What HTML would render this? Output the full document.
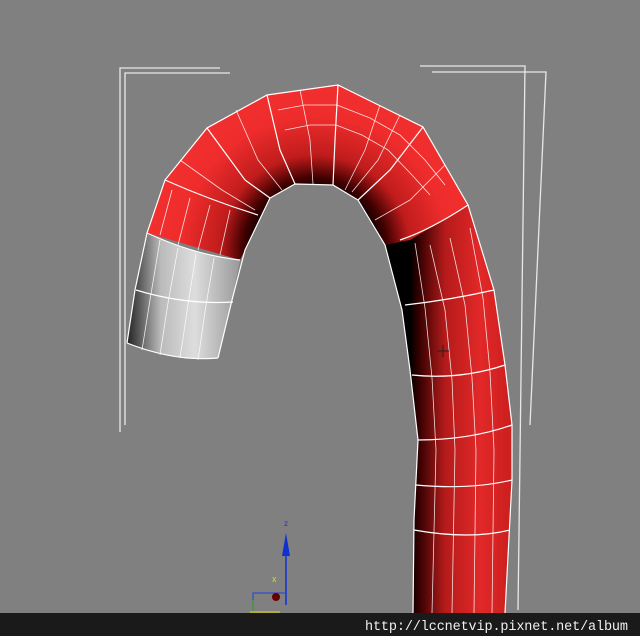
<!DOCTYPE html>
<html><head><meta charset="utf-8"><style>
html,body{margin:0;padding:0;background:#808080;}
svg{display:block}
</style></head><body>
<svg width="640" height="636" viewBox="0 0 640 636" xmlns="http://www.w3.org/2000/svg">
<defs>
<linearGradient id="leg" x1="410" y1="0" x2="510" y2="0" gradientUnits="userSpaceOnUse">
<stop offset="0" stop-color="#000"/><stop offset="0.08" stop-color="#300000"/><stop offset="0.35" stop-color="#b51a1a"/><stop offset="0.7" stop-color="#e22828"/><stop offset="1" stop-color="#cc1f1f"/></linearGradient>
<radialGradient id="arch" cx="315" cy="250" r="190" gradientUnits="userSpaceOnUse">
<stop offset="0.3" stop-color="#000"/><stop offset="0.38" stop-color="#400000"/><stop offset="0.5" stop-color="#c01c1c"/><stop offset="0.7" stop-color="#ee2c2c"/><stop offset="1" stop-color="#f53232"/></radialGradient>
<linearGradient id="end" x1="127" y1="0" x2="240" y2="0" gradientUnits="userSpaceOnUse">
<stop offset="0" stop-color="#222"/><stop offset="0.3" stop-color="#bbb"/><stop offset="0.6" stop-color="#ddd"/><stop offset="1" stop-color="#999"/></linearGradient>
</defs>
<rect width="640" height="636" fill="#808080"/>
<g stroke="#e8e8e8" stroke-width="1.3" fill="none">
<polyline points="220,68 120,68 120,432"/>
<polyline points="230,73 125,73 125,425"/>
<polyline points="420,66 525,66 518,610"/>
<polyline points="432,72 546,72 530,425"/>
</g>
<!-- right leg -->
<path d="M423,127 L468,205 L494,290 L505,365 L512,425 L512,480 L505,613 L413,613 L414,520 L418,440 L410,370 L402,310 L385,245 L358,200 L370,170 Z" fill="url(#leg)"/>
<!-- arch -->
<path d="M147,233 L165,180 L207,128 L267,95 L338,85 L423,127 L468,205 L410,240 L385,245 L358,200 L333,185 L295,184 L270,198 L245,250 L240,260 Z" fill="url(#arch)"/>
<!-- white end -->
<path d="M147,233 Q195,255 240,260 L232,300 L218,358 Q175,362 127,343 L135,290 Z" fill="url(#end)"/>
<g stroke="#fff" stroke-width="1.2" fill="none">
<path d="M147,233 Q195,255 240,260"/>
<path d="M136,290 Q185,305 233,302"/>
<path d="M127,343 Q175,362 218,358"/>
<path d="M165,180 Q210,200 258,215"/>
<path d="M207,128 L245,180 L270,198"/>
<path d="M267,95 L280,150 L295,184"/>
<path d="M338,85 L335,140 L333,185"/>
<path d="M423,127 L390,170 L358,200"/>
<path d="M468,205 Q430,230 400,240"/>
<path d="M494,290 Q450,300 405,305"/>
<path d="M505,365 Q460,380 412,375"/>
<path d="M512,425 Q470,440 418,440"/>
<path d="M512,480 Q470,490 416,485"/>
<path d="M510,530 Q470,540 414,530"/>
<path d="M127,343 L135,290 L147,233 L165,180 L207,128 L267,95 L338,85 L423,127 L468,205 L494,290 L505,365 L512,425 L512,480 L505,613"/>
<path d="M218,358 L232,300 L245,250 L270,198 L295,184 L333,185 L358,200 L385,245 L402,310 L410,370 L418,440 L414,520 L413,613"/>
</g>
<g stroke="#fff" stroke-width="0.8" fill="none" opacity="0.85">
<path d="M430,245 L445,310 L452,380 L455,450 L452,613"/>
<path d="M450,238 L465,305 L472,378 L476,450 L474,613"/>
<path d="M470,228 L483,298 L490,372 L494,450 L492,613"/>
<path d="M415,243 L425,308 L432,378 L436,450 L432,613"/>
<path d="M160,240 L150,300 L142,350"/><path d="M178,248 L168,303 L160,355"/><path d="M196,254 L188,305 L180,358"/><path d="M214,258 L206,305 L198,360"/>
<path d="M172,190 L160,235"/><path d="M190,198 L178,245"/><path d="M210,205 L198,250"/><path d="M230,210 L220,255"/>
<path d="M300,90 L310,140 L313,184"/><path d="M236,110 L258,160 L282,190"/><path d="M380,105 L365,150 L345,190"/>
<path d="M180,160 L222,190 L255,210"/><path d="M400,115 L378,160 L352,192"/><path d="M445,165 L410,200 L375,220"/>
<path d="M278,110 L305,105 L337,105 L370,118 L400,135 L425,160 L445,185"/>
<path d="M285,130 L310,125 L336,125 L362,135 L388,150 L412,175 L430,195"/>
</g>
<!-- gizmo -->
<g>
<line x1="286" y1="545" x2="286" y2="605" stroke="#1030d0" stroke-width="1.5"/>
<polygon points="286,533 282,556 290,556" fill="#1030d0"/>
<text x="284" y="526" font-family="Liberation Sans,sans-serif" font-size="8" fill="#2030e0">z</text>
<text x="272" y="582" font-family="Liberation Sans,sans-serif" font-size="9" fill="#e8d800">x</text>
<polyline points="253,610 253,593 285,593" stroke="#2040e0" fill="none"/>
<line x1="253" y1="600" x2="253" y2="612" stroke="#20a020"/>
<line x1="250" y1="612" x2="280" y2="612" stroke="#e8d800"/>
<circle cx="276" cy="597" r="4" fill="#600"/>
<polygon points="195,624 215,619 215,629" fill="#0a4010"/>
</g>
<g stroke="#222" stroke-width="1" fill="none"><line x1="437" y1="351" x2="449" y2="351"/><line x1="443" y1="345" x2="443" y2="357"/></g>
<rect x="0" y="613" width="640" height="23" fill="#1a1a1a"/>
<text x="628" y="630" text-anchor="end" textLength="263" font-family="Liberation Mono,monospace" font-size="13.5" fill="#f0f0f0">http://lccnetvip.pixnet.net/album</text>
</svg>
</body></html>
